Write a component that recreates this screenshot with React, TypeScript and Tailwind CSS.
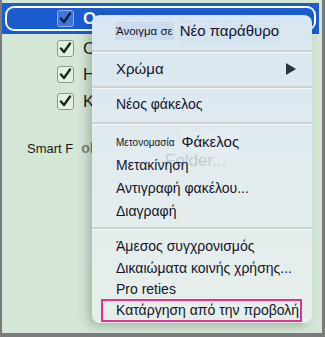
import React from "react";

function Check({ onBlue = false }: { onBlue?: boolean }) {
  return (
    <div
      className={
        onBlue
          ? "w-[17px] h-[17px] rounded-[3px] border border-[#8fb0e0] bg-[#3d78d8] flex items-center justify-center"
          : "w-[17px] h-[17px] rounded-[3px] border border-[#8a9a8c] bg-[#e4f0e4] flex items-center justify-center"
      }
    >
      <svg width="13" height="13" viewBox="0 0 13 13">
        <path d="M2 6.5 L5 10 L11 1.5" fill="none" stroke={onBlue ? "#0b1a3a" : "#1c2a1c"} strokeWidth="2.4" strokeLinecap="round" strokeLinejoin="round" />
      </svg>
    </div>
  );
}

function Row({ letter }: { letter: string }) {
  return (
    <div className="h-[26.5px] flex items-center pl-[55px]">
      <Check />
      <span className="ml-[9px] text-[17px] text-[#1a1a1a]">{letter}</span>
    </div>
  );
}

function Sep({ mt }: { mt: string }) {
  return <div className={`${mt} h-[3px] border-t-2 border-[#c9d3d6] border-b border-b-white/70`} />;
}

export default function App() {
  return (
    <div className="relative w-[325px] h-[337px] bg-[#d4e7d7] border-l-2 border-r-[3px] border-b-[4px] border-[#7b7b7b] overflow-hidden font-['Liberation_Sans',Arial,sans-serif]">
      <div className="pt-[3px]">
        <div className="mr-[3px] h-[31px] bg-[#1b5ccf] p-[3px]">
          <div className="h-full border-2 border-white rounded-[9px] flex items-center pl-[50px]">
            <Check onBlue />
            <span className="ml-[9px] text-[17px] font-bold text-white">O</span>
          </div>
        </div>
        <div className="pt-[1px]">
          <Row letter="C" />
          <Row letter="H" />
          <Row letter="K" />
        </div>
        <div className="mt-[24px] pl-[25px] flex items-center h-[20px]">
          <span className="text-[13px] text-[#1a1a1a]">Smart F</span>
          <span className="ml-[8px] text-[14px] font-bold text-[#7a807a]">old</span>
        </div>
      </div>

      <div className="absolute left-[90px] top-[15px] w-[220px] h-[308px] rounded-[8px] bg-gradient-to-b from-[#d7e6f1] via-[#e2ecef] to-[#e6efe9] shadow-[-4px_3px_10px_rgba(40,60,40,0.28)] text-[#14142a] text-[14px] whitespace-nowrap">
        <div className="pt-[4px]">
          <div className="h-[24px] flex items-center pl-[23px]">
            <span className="text-[11.5px] bg-[#cadced] px-[1px] h-[18px] leading-[18px]">Άνοιγμα σε</span>
            <span className="ml-[5px] text-[15px] bg-[#d3e3f0] px-[1px]">Νέο παράθυρο</span>
          </div>
          <Sep mt="mt-[7px]" />
          <div className="mt-[4px] h-[24px] flex items-center pl-[24px] pr-[16px] justify-between">
            <span className="text-[15px]">Χρώμα</span>
            <svg width="10" height="12" viewBox="0 0 10 12">
              <path d="M0 0 L10 6 L0 12 Z" fill="#2e3338" />
            </svg>
          </div>
          <Sep mt="mt-[5px]" />
          <div className="mt-[3px] h-[24px] flex items-center pl-[24px]">Νέος φάκελος</div>
          <Sep mt="mt-[6px]" />
          <div className="relative">
            <div className="mt-[5px] h-[24px] flex items-center pl-[24px]">
              <span className="text-[10px]">Μετονομασία</span>
              <span className="ml-[6px] text-[15px] bg-[#e3ecee] px-[1px]">Φάκελος</span>
            </div>
            <span className="absolute left-[73px] top-[18px] text-[17px] text-[#c4cccb]">Folder...</span>
            <div className="relative h-[23px] flex items-center pl-[24px]">Μετακίνηση</div>
            <div className="h-[23px] flex items-center pl-[24px]">Αντιγραφή φακέλου...</div>
            <div className="h-[23px] flex items-center pl-[24px]">Διαγραφή</div>
          </div>
          <Sep mt="mt-[4px]" />
          <div className="mt-[5px] h-[22px] flex items-center pl-[24px]">Άμεσος συγχρονισμός</div>
          <div className="h-[22px] flex items-center pl-[24px]">Δικαιώματα κοινής χρήσης...</div>
          <div className="h-[21px] flex items-center pl-[24px]">Pro reties</div>
          <div className="mt-[-1px] ml-[9px] w-[201px] h-[23px] border-2 border-[#e8318c] flex items-center pl-[13px]">
            Κατάργηση από την προβολή
          </div>
        </div>
      </div>
    </div>
  );
}
